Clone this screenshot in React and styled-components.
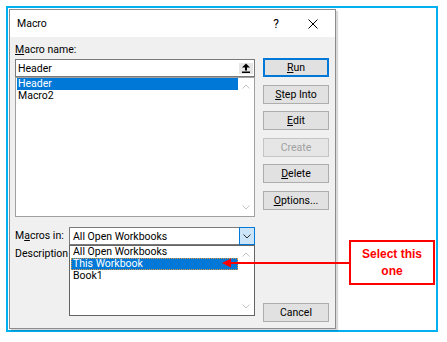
import React from 'react';
import styled, {createGlobalStyle} from "styled-components";

const GlobalStyle = createGlobalStyle`
  body {
    margin: 0;
    background: #fff;
    font-family: Roboto, "Liberation Sans", sans-serif;
    font-size: 10.5px;
    color: #000;
  }
`

const Frame = styled.div`
  position: relative;
  box-sizing: border-box;
  margin: 6px;
  width: 432px;
  height: 326px;
  border: 2px solid #00b0f0;
  padding: 1px 0 0 1px;
  background: #fff;
`

const Dialog = styled.div`
  box-sizing: border-box;
  width: 327px;
  height: 320px;
  border: 1px solid #8c8c8c;
  box-shadow: 2px 2px 1px rgba(0, 0, 0, 0.15);
  background: #f0f0f0;
  display: flex;
  flex-direction: column;
`

const TitleBar = styled.div`
  height: 27px;
  background: #fff;
  display: flex;
  align-items: center;
  padding-left: 7px;
  font-size: 10.5px;
`
const Title = styled.div`
  flex: 1;
`
const TitleButton = styled.div`
  width: ${p => p.$w}px;
  height: 27px;
  display: flex;
  align-items: center;
  justify-content: center;
  font-size: 12px;
`

const Body = styled.div`
  flex: 1;
  display: flex;
  gap: 8px;
  padding: 6px 0 6px 5px;
`
const LeftCol = styled.div`
  width: 240px;
  display: flex;
  flex-direction: column;
`
const RightCol = styled.div`
  width: 66px;
  display: flex;
  flex-direction: column;
  gap: 7.5px;
  padding-top: 15px;
`

const Label = styled.div`
  height: 14px;
  line-height: 14px;
  margin-bottom: ${p => p.$mb || 0}px;
  margin-top: ${p => p.$mt || 0}px;
  width: ${p => p.$w ? p.$w + 'px' : 'auto'};
  flex-shrink: 0;
`
const U = styled.span`
  text-decoration: underline;
  text-underline-offset: 1px;
`

const NameInput = styled.div`
  box-sizing: border-box;
  height: 18px;
  border: 1px solid #7a7a7a;
  background: #fff;
  display: flex;
  align-items: center;
  padding: 0 1px 0 2px;
`
const InputText = styled.div`
  flex: 1;
`
const UpButton = styled.div`
  width: 14px;
  height: 11px;
  background: #e6e6e6;
  display: flex;
  align-items: center;
  justify-content: center;
`

const ListBox = styled.div`
  box-sizing: border-box;
  height: ${p => p.$h}px;
  border: 1px solid ${p => p.$dark ? '#646464' : '#a0a0a0'};
  background: #fff;
  display: flex;
`
const Items = styled.div`
  flex: 1;
  padding-left: 1px;
`
const Item = styled.div`
  height: 12px;
  line-height: 12px;
  padding-left: ${p => p.$pad || 1}px;
  white-space: nowrap;
  background: ${p => p.$selected ? '#0078d7' : 'transparent'};
  color: ${p => p.$selected ? '#fff' : '#000'};
  outline: ${p => p.$focus ? '1px dotted #e0963c' : 'none'};
  outline-offset: -1px;
`
const ScrollBar = styled.div`
  width: 16px;
  display: flex;
  flex-direction: column;
  justify-content: space-between;
`
const ScrollArrow = styled.div`
  height: 17px;
  display: flex;
  align-items: center;
  justify-content: center;
`

const MacrosRow = styled.div`
  margin-top: 10px;
  display: flex;
  align-items: center;
`
const Combo = styled.div`
  position: relative;
  flex: 1;
`
const ComboField = styled.div`
  box-sizing: border-box;
  height: 18px;
  border: 1px solid #7a7a7a;
  background: #fff;
  display: flex;
  align-items: center;
`
const ComboText = styled.div`
  flex: 1;
  padding-left: 3px;
`
const DropButton = styled.div`
  box-sizing: border-box;
  width: 16px;
  height: 18px;
  margin: -1px -1px -1px 0;
  background: #cce4f7;
  border: 1px solid #0078d7;
  display: flex;
  align-items: center;
  justify-content: center;
`
const DropList = styled.div`
  position: absolute;
  top: 100%;
  left: 0;
  right: 0;
  z-index: 2;
`

const Button = styled.div`
  box-sizing: border-box;
  height: 19px;
  display: flex;
  align-items: center;
  justify-content: center;
  background: ${p => p.$disabled ? '#e6e6e6' : '#e1e1e1'};
  border: 1px solid ${p => p.$default ? '#0078d7' : p.$disabled ? '#c4c4c4' : '#adadad'};
  box-shadow: ${p => p.$default ? 'inset 0 0 0 1px #0078d7' : 'none'};
  color: ${p => p.$disabled ? '#a0a0a0' : '#000'};
  margin-top: ${p => p.$bottom ? 'auto' : '0'};
`

const Callout = styled.div`
  position: absolute;
  left: 341px;
  top: 232px;
  box-sizing: border-box;
  width: 86px;
  height: 45px;
  border: 2px solid #f00;
  background: #fff;
  display: flex;
  align-items: center;
  justify-content: center;
  text-align: center;
  font-family: "Liberation Sans", Arial, sans-serif;
  font-weight: bold;
  font-size: 12px;
  line-height: 17px;
  color: #f00;
`
const ArrowSvg = styled.svg`
  position: absolute;
  left: 213px;
  top: 250px;
  z-index: 3;
`

const Chevron = ({up, color = '#c4c4c4'}) => (
    <svg width="8" height="5" viewBox="0 0 8 5">
        <path d={up ? "M0.5 4.5 L4 1 L7.5 4.5" : "M0.5 0.5 L4 4 L7.5 0.5"} fill="none" stroke={color}
              strokeWidth="1"/>
    </svg>
)

const Scroll = () => (
    <ScrollBar>
        <ScrollArrow><Chevron up/></ScrollArrow>
        <ScrollArrow><Chevron/></ScrollArrow>
    </ScrollBar>
)

export default function App() {
    return (
        <>
            <GlobalStyle/>
            <Frame>
                <Dialog>
                    <TitleBar>
                        <Title>Macro</Title>
                        <TitleButton $w={30}>?</TitleButton>
                        <TitleButton $w={44}>
                            <svg width="10" height="10" viewBox="0 0 10 10">
                                <path d="M0.5 0.5 L9.5 9.5 M9.5 0.5 L0.5 9.5" stroke="#000" strokeWidth="1"/>
                            </svg>
                        </TitleButton>
                    </TitleBar>
                    <Body>
                        <LeftCol>
                            <Label $mb={2}><U>M</U>acro name:</Label>
                            <NameInput>
                                <InputText>Header</InputText>
                                <UpButton>
                                    <svg width="10" height="10" viewBox="0 0 10 10">
                                        <path d="M5 0.5 L1 4.5 L9 4.5 Z" fill="#000"/>
                                        <rect x="4" y="4" width="2" height="3.5" fill="#000"/>
                                        <rect x="1" y="8.5" width="8" height="1.5" fill="#000"/>
                                    </svg>
                                </UpButton>
                            </NameInput>
                            <ListBox $h={140}>
                                <Items>
                                    <Item $selected>Header</Item>
                                    <Item>Macro2</Item>
                                </Items>
                                <Scroll/>
                            </ListBox>
                            <MacrosRow>
                                <Label $w={54}>M<U>a</U>cros in:</Label>
                                <Combo>
                                    <ComboField>
                                        <ComboText>All Open Workbooks</ComboText>
                                        <DropButton><Chevron color="#333"/></DropButton>
                                    </ComboField>
                                    <DropList>
                                        <ListBox $h={71} $dark>
                                            <Items>
                                                <Item $pad={2}>All Open Workbooks</Item>
                                                <Item $pad={2} $selected $focus>This Workbook</Item>
                                                <Item $pad={2}>Book1</Item>
                                            </Items>
                                            <Scroll/>
                                        </ListBox>
                                    </DropList>
                                </Combo>
                            </MacrosRow>
                            <Label $mt={2}>Description</Label>
                        </LeftCol>
                        <RightCol>
                            <Button $default><span><U>R</U>un</span></Button>
                            <Button><span><U>S</U>tep Into</span></Button>
                            <Button><span><U>E</U>dit</span></Button>
                            <Button $disabled>Create</Button>
                            <Button><span><U>D</U>elete</span></Button>
                            <Button><span><U>O</U>ptions...</span></Button>
                            <Button $bottom>Cancel</Button>
                        </RightCol>
                    </Body>
                </Dialog>
                <ArrowSvg width="129" height="10" viewBox="0 0 129 10">
                    <path d="M1 5 L10 0.5 L10 9.5 Z" fill="#f00"/>
                    <line x1="8" y1="5" x2="129" y2="5" stroke="#f00" strokeWidth="2"/>
                </ArrowSvg>
                <Callout>Select this<br/>one</Callout>
            </Frame>
        </>
    );
}
